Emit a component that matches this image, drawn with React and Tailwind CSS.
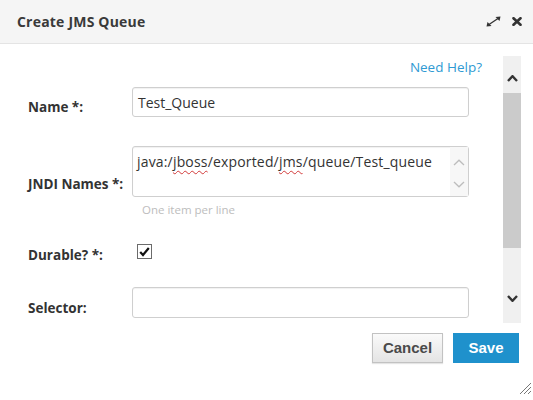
import React from "react";

function ExpandIcon() {
  return (
    <svg width="15" height="11" viewBox="0 0 15 11">
      <line x1="3" y1="8.5" x2="12" y2="2.5" stroke="#333" strokeWidth="1.3" />
      <polygon points="14.5,0.5 9.5,1 13.5,5" fill="#333" />
      <polygon points="0.5,10.5 5.5,10 1.5,6" fill="#333" />
    </svg>
  );
}

function CloseIcon() {
  return (
    <svg width="10" height="9" viewBox="0 0 10 9">
      <line x1="1.5" y1="1.2" x2="8.5" y2="7.8" stroke="#333" strokeWidth="2.6" strokeLinecap="round" />
      <line x1="8.5" y1="1.2" x2="1.5" y2="7.8" stroke="#333" strokeWidth="2.6" strokeLinecap="round" />
    </svg>
  );
}

function Chevron({ up, color = "#333", width = 2.4, w = 11, h = 7 }) {
  return (
    <svg width={w} height={h} viewBox={`0 0 ${w} ${h}`}>
      {up ? (
        <polyline points={`1,${h - 1} ${w / 2},1.2 ${w - 1},${h - 1}`} fill="none" stroke={color} strokeWidth={width} />
      ) : (
        <polyline points={`1,1 ${w / 2},${h - 1.2} ${w - 1},1`} fill="none" stroke={color} strokeWidth={width} />
      )}
    </svg>
  );
}

function Label({ children, pt }) {
  return (
    <div className={`w-[104px] shrink-0 font-bold text-[13.5px] leading-[20px] text-[#333] ${pt}`}>{children}</div>
  );
}

export default function App() {
  const sq = "underline decoration-wavy decoration-[#d23a3a] decoration-1 underline-offset-[3px]";
  return (
    <div
      className="relative w-[533px] h-[400px] bg-white overflow-hidden text-[#333]"
      style={{ fontFamily: '"Open Sans", "Noto Sans", sans-serif' }}
    >
      {/* Header */}
      <div className="h-[44px] bg-[#f5f5f5] border-b border-[#e4e4e4] flex items-center justify-between pl-[17px] pr-[11px]">
        <div className="font-bold text-[14px] text-[#3a3a3a] tracking-[0.2px]">Create JMS Queue</div>
        <div className="flex items-center gap-[11px] pb-[1px]">
          <ExpandIcon />
          <CloseIcon />
        </div>
      </div>

      {/* Body */}
      <div className="flex mt-[12px] h-[267px]">
        <div className="flex-1 overflow-hidden pl-[28px] pr-[34px]">
          <div className="h-[22px] leading-[22px] text-right text-[13.5px] text-[#2f9ad3] mr-[-13px]">Need Help?</div>

          {/* Name */}
          <div className="flex items-start mt-[9px]">
            <Label pt="pt-[10px]">Name *:</Label>
            <div className="w-[337px] h-[30px] border border-[#cfcfcf] rounded-[3px] px-[5px] flex items-center text-[14px] text-[#333] shadow-[inset_0_1px_1px_rgba(0,0,0,0.06)]">
              Test_Queue
            </div>
          </div>

          {/* JNDI */}
          <div className="flex items-start mt-[29px]">
            <Label pt="pt-[28px]">JNDI Names *:</Label>
            <div className="w-[337px]">
              <div className="h-[51px] border border-[#cfcfcf] rounded-[3px] flex shadow-[inset_0_1px_1px_rgba(0,0,0,0.06)]">
                <div className="flex-1 pl-[4px] pt-[5px] text-[14px] leading-[20px] tracking-[0.17px] text-[#333] whitespace-nowrap">
                  java:/<span className={sq}>jboss</span>/exported/<span className={sq}>jms</span>/queue/Test_queue
                </div>
                <div className="w-[18px] bg-[#f7f7f7] flex flex-col items-center pt-[12px]">
                  <Chevron up color="#bdbdbd" width={1.3} w={12} h={7} />
                  <div className="h-[15px]" />
                  <Chevron color="#bdbdbd" width={1.3} w={12} h={7} />
                </div>
              </div>
              <div className="mt-[6px] pl-[10px] text-[11.5px] leading-[14px] text-[#bdbdbd]">One item per line</div>
            </div>
          </div>

          {/* Durable */}
          <div className="flex items-start mt-[27px]">
            <Label pt="pt-[1px]">Durable? *:</Label>
            <div className="pl-[5px]">
              <div className="w-[15px] h-[15px] border border-[#6b6b6b] bg-white flex items-center justify-center">
                <svg width="11" height="10" viewBox="0 0 11 10">
                  <polyline points="1.2,5 4,8 9.8,1" fill="none" stroke="#111" strokeWidth="2.2" />
                </svg>
              </div>
            </div>
          </div>

          {/* Selector */}
          <div className="flex items-start mt-[22px]">
            <Label pt="pt-[11px]">Selector:</Label>
            <div className="w-[337px] h-[31px] border border-[#cfcfcf] rounded-[3px] shadow-[inset_0_1px_1px_rgba(0,0,0,0.06)]" />
          </div>
        </div>

        {/* Scrollbar */}
        <div className="w-[18px] mr-[12px] bg-[#f0f0f0] flex flex-col">
          <div className="h-[37px] flex justify-center pt-[19px]">
            <Chevron up />
          </div>
          <div className="h-[155px] bg-[#cbcbcb]" />
          <div className="flex-1 flex justify-center pt-[47px]">
            <Chevron />
          </div>
        </div>
      </div>

      {/* Footer */}
      <div className="flex justify-end gap-[10px] mt-[10px] pr-[14px]" style={{ fontFamily: '"Liberation Sans", Arial, sans-serif' }}>
        <button className="w-[71px] h-[30px] border border-[#c2c2c2] bg-gradient-to-b from-[#fafafa] to-[#e4e4e4] text-[#4a4a4a] font-bold text-[15px] shadow-[0_1px_1px_rgba(0,0,0,0.1)]">
          Cancel
        </button>
        <button className="w-[66px] h-[30px] bg-[#1f91cc] text-white font-bold text-[15px]">Save</button>
      </div>

      {/* Resize grip */}
      <div className="absolute right-[1px] bottom-[5px]">
        <svg width="13" height="13" viewBox="0 0 13 13">
          <line x1="1" y1="12" x2="12" y2="1" stroke="#777" strokeWidth="1" />
          <line x1="5" y1="12" x2="12" y2="5" stroke="#777" strokeWidth="1" />
          <line x1="9" y1="12" x2="12" y2="9" stroke="#777" strokeWidth="1" />
        </svg>
      </div>
    </div>
  );
}
